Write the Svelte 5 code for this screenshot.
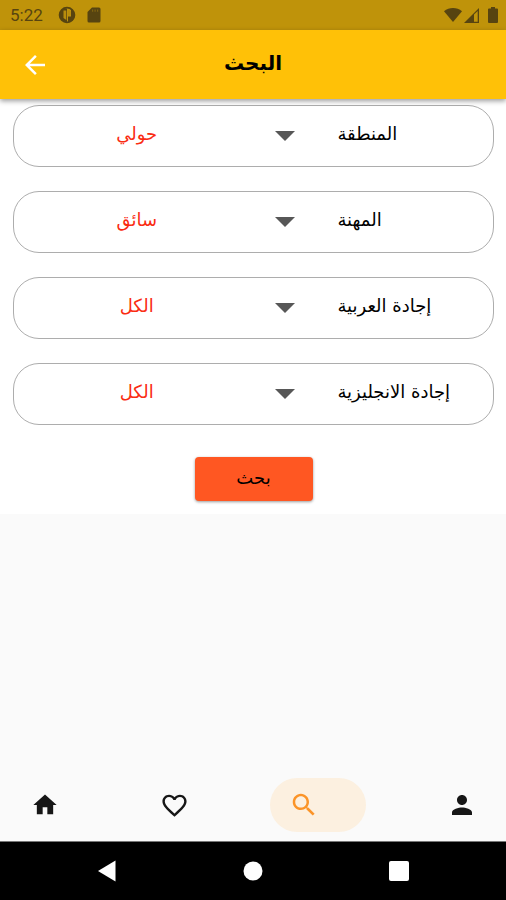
<script>
  let fields = $state([
    { id: 'area', label: 'المنطقة', value: 'حولي', options: ['حولي'] },
    { id: 'job', label: 'المهنة', value: 'سائق', options: ['سائق'] },
    { id: 'arabic', label: 'إجادة العربية', value: 'الكل', options: ['الكل'] },
    { id: 'english', label: 'إجادة الانجليزية', value: 'الكل', options: ['الكل'] }
  ]);
</script>

<div class="screen">
  <div class="status">
    <span class="time">5:22</span>
    <svg width="18" height="18" viewBox="0 0 18 18" aria-hidden="true">
      <circle cx="9" cy="9" r="7.400" fill="none" stroke="#574410" stroke-width="1.800" />
      <path d="M2 6.500 5.500 2.500H9V16H7.500A7.400 7.400 0 0 1 2 6.500z" fill="#574410" />
      <path d="M5.500 4.500h2.800v9.500L5.500 12zM10 4.500h3v5h-3z" fill="#b88d0c" />
      <path d="M10 10.500h6.500A7.500 7.500 0 0 1 10 16.500zM13 3l3 3v5h-3z" fill="#574410" />
    </svg>
    <svg class="card" width="14" height="18" viewBox="0 0 14 18" aria-hidden="true">
      <path d="M5 1.500h7A1.500 1.500 0 0 1 13.500 3v12a1.500 1.500 0 0 1-1.500 1.500H2A1.500 1.500 0 0 1 .500 15V6z" fill="#574410" />
      <path d="M5 3.500h1.200v2.200H5zM7.500 3.500h1.200v2.200H7.500zM10 3.500h1.200v2.200H10z" fill="#806310" />
    </svg>
    <span class="spacer"></span>
    <svg width="18" height="16" viewBox="0 0 18 16" aria-hidden="true">
      <path d="M0 4.200C5 0 13 0 18 4.200L9 15z" fill="#574410" />
    </svg>
    <svg class="signal" width="16" height="16" viewBox="0 0 16 16" aria-hidden="true">
      <path d="M0 16 15 1v15z" fill="#574410" />
      <path d="M10 7.500 13.700 4v10.700H10z" fill="#bf930a" />
    </svg>
    <svg class="battery" width="10" height="16" viewBox="0 0 10 16" aria-hidden="true">
      <path d="M3 0h4v1.500h2a1 1 0 0 1 1 1V15a1 1 0 0 1-1 1H1a1 1 0 0 1-1-1V2.500a1 1 0 0 1 1-1h2z" fill="#574410" />
    </svg>
  </div>

  <header>
    <button class="back" aria-label="رجوع">
      <svg width="30" height="30" viewBox="0 0 24 24"><path d="M20 11H7.830l5.590-5.590L12 4l-8 8 8 8 1.410-1.410L7.830 13H20z" fill="#fff" /></svg>
    </button>
    <h1 dir="rtl">البحث</h1>
  </header>

  <main>
    <form onsubmit={(e) => e.preventDefault()}>
      {#each fields as field (field.id)}
        <div class="field">
          <div class="picker">
            <select id={field.id} bind:value={field.value}>
              {#each field.options as option}
                <option value={option}>{option}</option>
              {/each}
            </select>
            <svg width="20" height="10" viewBox="0 0 20 10" aria-hidden="true"><path d="M0 0h20L10 10z" fill="#575757" /></svg>
          </div>
          <label for={field.id}><bdi>{field.label}</bdi></label>
        </div>
      {/each}
      <button class="submit" type="submit">بحث</button>
    </form>
  </main>

  <nav class="tabs">
    <a href="#home" aria-label="الرئيسية">
      <svg width="28" height="28" viewBox="0 0 24 24"><path d="M10 20v-6h4v6h5v-8h3L12 3 2 12h3v8z" fill="#161616" /></svg>
    </a>
    <a href="#favorites" aria-label="المفضلة">
      <svg width="29" height="29" viewBox="0 0 24 24"><path d="M16.500 3c-1.740 0-3.410.810-4.500 2.090C10.910 3.810 9.240 3 7.500 3 4.420 3 2 5.420 2 8.500c0 3.780 3.400 6.860 8.550 11.540L12 21.350l1.450-1.320C18.600 15.360 22 12.280 22 8.500 22 5.420 19.580 3 16.500 3zm-4.400 15.550-.1.100-.1-.1C7.140 14.240 4 11.390 4 8.500 4 6.500 5.500 5 7.500 5c1.540 0 3.040.990 3.570 2.360h1.870C13.460 5.990 14.960 5 16.500 5c2 0 3.500 1.500 3.500 3.500 0 2.890-3.140 5.740-7.900 10.050z" fill="#161616" /></svg>
    </a>
    <a href="#search" class="active" aria-label="البحث" aria-current="page">
      <svg width="30" height="30" viewBox="0 0 24 24"><path d="M15.500 14h-.790l-.280-.270C15.410 12.590 16 11.110 16 9.500 16 5.910 13.090 3 9.500 3S3 5.910 3 9.500 5.910 16 9.500 16c1.610 0 3.090-.590 4.230-1.570l.270.280v.790l5 4.990L20.490 19l-4.990-5zm-6 0C7.010 14 5 11.990 5 9.500S7.010 5 9.500 5 14 7.010 14 9.500 11.990 14 9.500 14z" fill="#fb9428" /></svg>
    </a>
    <a href="#profile" aria-label="الحساب">
      <svg width="30" height="30" viewBox="0 0 24 24"><path d="M12 12c2.210 0 4-1.790 4-4s-1.790-4-4-4-4 1.790-4 4 1.790 4 4 4zm0 2c-2.670 0-8 1.340-8 4v2h16v-2c0-2.660-5.330-4-8-4z" fill="#161616" /></svg>
    </a>
  </nav>

  <div class="system">
    <button aria-label="Back"><svg width="20" height="22" viewBox="0 0 20 22"><path d="M18.500.500v21L1 11z" fill="#fff" /></svg></button>
    <button aria-label="Home"><svg width="20" height="20" viewBox="0 0 20 20"><circle cx="10" cy="10" r="9.500" fill="#fff" /></svg></button>
    <button aria-label="Overview"><svg width="20" height="20" viewBox="0 0 20 20"><rect width="20" height="20" rx="2" fill="#fff" /></svg></button>
  </div>
</div>

<style>
  .screen {
    display: flex;
    flex-direction: column;
    min-height: 100vh;
    background: #fafafa;
    font-family: "DejaVu Sans", sans-serif;
    color: #000;
  }
  svg {
    display: block;
    flex: none;
  }
  button {
    border: 0;
    padding: 0;
    background: none;
    font: inherit;
    color: inherit;
    cursor: pointer;
  }
  .status {
    display: flex;
    align-items: center;
    height: 30px;
    padding: 0 8px 0 10px;
    background: #bf930a;
    color: #574410;
  }
  .time {
    width: 48px;
    font-family: Roboto, sans-serif;
    font-size: 17px;
    line-height: 20px;
  }
  .card {
    margin-left: 11px;
  }
  .spacer {
    flex: 1;
  }
  .signal {
    margin-left: 2px;
  }
  .battery {
    margin-left: 8px;
  }
  header {
    display: grid;
    grid-template-columns: 70px 1fr 70px;
    align-items: center;
    height: 69px;
    background: #ffc107;
    box-shadow: 0 2px 5px rgba(0, 0, 0, 0.4);
    z-index: 1;
  }
  .back {
    display: grid;
    place-items: center;
    height: 48px;
  }
  h1 {
    margin: 0;
    padding-bottom: 4px;
    font-size: 20px;
    line-height: 28px;
    font-weight: 700;
    text-align: center;
  }
  main {
    background: #fff;
  }
  form {
    display: flex;
    flex-direction: column;
    gap: 24px;
    padding: 6px 12px 13px 13px;
  }
  .field {
    display: grid;
    grid-template-columns: 29fr 19fr;
    align-items: center;
    height: 62px;
    box-sizing: border-box;
    border: 1px solid #adadad;
    border-radius: 26px;
    font-size: 18px;
    line-height: 28px;
  }
  .picker {
    display: grid;
    align-items: center;
    height: 100%;
  }
  .picker > * {
    grid-area: 1 / 1;
  }
  .picker svg {
    justify-self: end;
    margin-right: 8px;
    pointer-events: none;
  }
  select {
    appearance: none;
    width: 100%;
    height: 100%;
    border: 0;
    border-radius: 26px;
    padding: 0 44px 4px 0;
    background: none;
    color: #fa2c12;
    font: inherit;
    text-align: center;
    text-align-last: center;
  }
  label {
    padding: 0 0 4px 34px;
    white-space: nowrap;
  }
  .submit {
    align-self: center;
    width: 118px;
    height: 44px;
    margin-top: 8px;
    padding-bottom: 4px;
    border-radius: 4px;
    background: #ff5722;
    box-shadow: 0 1px 3px rgba(0, 0, 0, 0.4);
    font-size: 18px;
    font-weight: 500;
  }
  .tabs {
    display: flex;
    justify-content: space-between;
    margin-top: auto;
    padding: 0 14px 9px 15px;
  }
  .tabs a {
    display: grid;
    place-items: center;
    width: 60px;
    height: 54px;
  }
  .tabs a:first-child {
    margin-right: 4px;
  }
  .tabs .active {
    width: 96px;
    box-sizing: border-box;
    padding-right: 28px;
    border-radius: 27px;
    background: #fcf0e0;
  }
  .system {
    display: flex;
    justify-content: center;
    gap: 86px;
    height: 58px;
    border-top: 1px solid #777;
    background: #000;
  }
  .system button {
    display: grid;
    place-items: center;
    width: 60px;
  }
</style>
